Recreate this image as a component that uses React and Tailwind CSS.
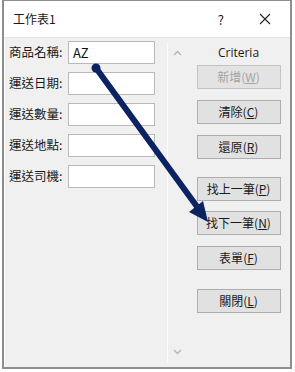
import React from 'react';

const FIELDS = ["商品名稱:", "運送日期:", "運送數量:", "運送地點:", "運送司機:"];

// buttons: label, mnemonic, extra top gap, disabled
const BUTTONS = [
  { text: "新增", key: "W", mt: "mt-[6px]", disabled: true },
  { text: "清除", key: "C", mt: "mt-[11px]" },
  { text: "還原", key: "R", mt: "mt-[11px]" },
  { text: "找上一筆", key: "P", mt: "mt-[18px]" },
  { text: "找下一筆", key: "N", mt: "mt-[10px]" },
  { text: "表單", key: "F", mt: "mt-[11px]" },
  { text: "關閉", key: "L", mt: "mt-[19px]" },
];

const font = { fontFamily: '"Noto Sans CJK TC", "Noto Sans", sans-serif' };

function Chevron({ down }) {
  return (
    <svg width="9" height="6" viewBox="0 0 9 6" className="block">
      <polyline
        points={down ? "1,1 4.5,4.5 8,1" : "1,5 4.5,1.5 8,5"}
        fill="none"
        stroke="#b4b4b4"
        strokeWidth="1.3"
      />
    </svg>
  );
}

export default function App() {
  return (
    <div className="relative w-[295px] h-[372px] bg-white overflow-hidden" style={font}>
      <div className="ml-[2px] w-[290px] h-[369px] border border-[#8e8e8e] border-l-2 border-r-2 border-b-2 flex flex-col">
        {/* title bar */}
        <div className="h-[36px] bg-white flex items-center shrink-0">
          <span className="ml-[9px] text-[12px] text-[#1a1a1a] leading-none">工作表1</span>
          <span className="ml-auto text-[13px] text-[#1a1a1a] leading-none mr-[35px]">?</span>
          <svg width="12" height="12" viewBox="0 0 12 12" className="mr-[19px]">
            <path d="M1 1 L11 11 M11 1 L1 11" stroke="#222" strokeWidth="1.1" />
          </svg>
        </div>

        {/* body */}
        <div className="flex-1 bg-[#f0f0f0] flex border-t border-[#e6e6e6] shadow-[inset_1px_0_0_#fbfbfb]">
          {/* fields */}
          <div className="w-[160px] pt-[3px] flex flex-col gap-[8px]">
            {FIELDS.map((label, i) => (
              <div key={label} className="flex items-center h-[23px]">
                <span className="ml-[5px] w-[59px] text-[12.5px] text-[#1a1a1a] leading-none whitespace-nowrap">
                  {label}
                </span>
                <div className="w-[87px] h-[23px] bg-white border border-[#b9b9b9] flex items-center pl-[4px]">
                  {i === 0 && <span className="text-[13px] text-[#111] leading-none">AZ</span>}
                </div>
              </div>
            ))}
          </div>

          {/* scroll bar */}
          <div className="w-[19px] mt-[4px] mb-[4px] ml-[3px] border-l border-[#fbfbfb] flex flex-col items-center justify-between py-[8px]">
            <Chevron />
            <Chevron down />
          </div>

          {/* criteria panel */}
          <div className="flex-1 flex flex-col items-center pr-[5px] pt-[5px]">
            <span className="text-[12px] text-[#1a1a1a] leading-none mt-[4px] ml-[6px]" style={{ fontFamily: '"Open Sans", "Noto Sans", sans-serif' }}>
              Criteria
            </span>
            <div className="flex flex-col ml-[6px]">
              {BUTTONS.map((b) => (
                <div
                  key={b.key}
                  className={
                    b.mt +
                    " w-[84px] h-[24px] flex items-center justify-center text-[12px] leading-none border " +
                    (b.disabled
                      ? "bg-[#e3e3e3] border-[#c4c4c4] text-[#a3a3a3]"
                      : "bg-[#e1e1e1] border-[#adadad] text-[#1a1a1a]")
                  }
                >
                  {b.text}(<u>{b.key}</u>)
                </div>
              ))}
            </div>
          </div>
        </div>
      </div>

      {/* annotation arrow */}
      <svg className="absolute left-0 top-0 pointer-events-none" width="295" height="372" viewBox="0 0 295 372">
        <circle cx="96" cy="68" r="4.5" fill="#0b2461" />
        <line x1="96" y1="68" x2="198" y2="208" stroke="#0b2461" strokeWidth="6" strokeLinecap="round" />
        <polygon points="208,222 189,212 203,201" fill="#0b2461" />
      </svg>
    </div>
  );
}
